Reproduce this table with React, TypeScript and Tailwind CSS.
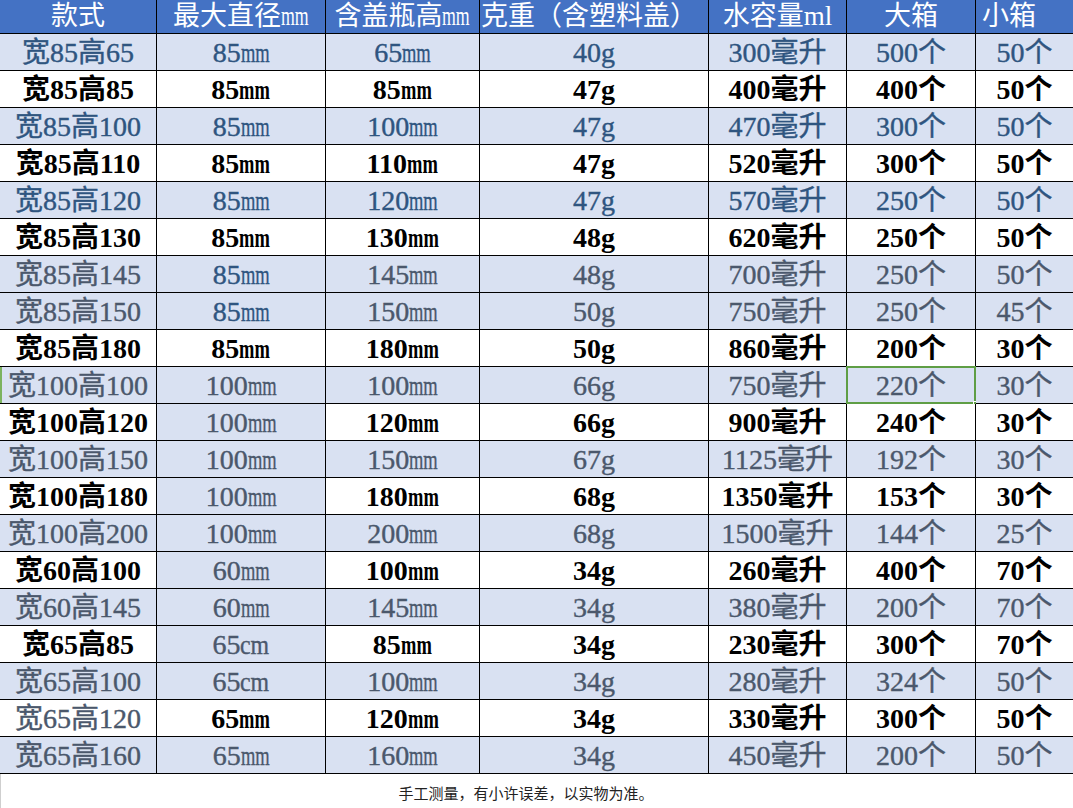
import React from 'react'

type RowKind =
  | 'shadedBlue'
  | 'shadedMixed'
  | 'shadedGray'
  | 'white'
  | 'whiteCol2'
  | 'whiteMuted1'

interface BottleRow {
  cells: string[]
  kind: RowKind
}

const rows: BottleRow[] = [
  { cells: ['宽85高65', '85mm', '65mm', '40g', '300毫升', '500个', '50个'], kind: 'shadedBlue' },
  { cells: ['宽85高85', '85mm', '85mm', '47g', '400毫升', '400个', '50个'], kind: 'white' },
  { cells: ['宽85高100', '85mm', '100mm', '47g', '470毫升', '300个', '50个'], kind: 'shadedBlue' },
  { cells: ['宽85高110', '85mm', '110mm', '47g', '520毫升', '300个', '50个'], kind: 'white' },
  { cells: ['宽85高120', '85mm', '120mm', '47g', '570毫升', '250个', '50个'], kind: 'shadedBlue' },
  { cells: ['宽85高130', '85mm', '130mm', '48g', '620毫升', '250个', '50个'], kind: 'white' },
  { cells: ['宽85高145', '85mm', '145mm', '48g', '700毫升', '250个', '50个'], kind: 'shadedMixed' },
  { cells: ['宽85高150', '85mm', '150mm', '50g', '750毫升', '250个', '45个'], kind: 'shadedMixed' },
  { cells: ['宽85高180', '85mm', '180mm', '50g', '860毫升', '200个', '30个'], kind: 'white' },
  { cells: ['宽100高100', '100mm', '100mm', '66g', '750毫升', '220个', '30个'], kind: 'shadedGray' },
  { cells: ['宽100高120', '100mm', '120mm', '66g', '900毫升', '240个', '30个'], kind: 'whiteCol2' },
  { cells: ['宽100高150', '100mm', '150mm', '67g', '1125毫升', '192个', '30个'], kind: 'shadedGray' },
  { cells: ['宽100高180', '100mm', '180mm', '68g', '1350毫升', '153个', '30个'], kind: 'whiteCol2' },
  { cells: ['宽100高200', '100mm', '200mm', '68g', '1500毫升', '144个', '25个'], kind: 'shadedGray' },
  { cells: ['宽60高100', '60mm', '100mm', '34g', '260毫升', '400个', '70个'], kind: 'whiteCol2' },
  { cells: ['宽60高145', '60mm', '145mm', '34g', '380毫升', '200个', '70个'], kind: 'shadedGray' },
  { cells: ['宽65高85', '65cm', '85mm', '34g', '230毫升', '300个', '70个'], kind: 'whiteCol2' },
  { cells: ['宽65高100', '65cm', '100mm', '34g', '280毫升', '324个', '50个'], kind: 'shadedGray' },
  { cells: ['宽65高120', '65mm', '120mm', '34g', '330毫升', '300个', '50个'], kind: 'whiteMuted1' },
  { cells: ['宽65高160', '65mm', '160mm', '34g', '450毫升', '200个', '50个'], kind: 'shadedGray' },
]

const SHADED_BLUE =
  'bg-[#d9e1f2] text-[#2f5580] font-normal [-webkit-text-stroke:0.4px]'
const SHADED_GRAY =
  'bg-[#d9e1f2] text-[#4b586c] font-normal [-webkit-text-stroke:0.4px]'
const WHITE_BLACK = 'bg-white text-black font-bold'
const WHITE_GRAY =
  'bg-white text-[#4b586c] font-normal [-webkit-text-stroke:0.4px]'

const cellTone = (kind: RowKind, col: number) => {
  switch (kind) {
    case 'shadedBlue':
      return SHADED_BLUE
    case 'shadedMixed':
      return col === 1 ? SHADED_BLUE : SHADED_GRAY
    case 'shadedGray':
      return SHADED_GRAY
    case 'whiteCol2':
      return col === 1 ? SHADED_GRAY : WHITE_BLACK
    case 'whiteMuted1':
      return col === 0 ? WHITE_GRAY : WHITE_BLACK
    default:
      return WHITE_BLACK
  }
}

const gridCols =
  'grid grid-cols-[157px_169px_154px_229px_138px_129px_97px]'

// the sheet's font draws latin letters half width, so squeeze the units
function CellText({ value }: { value: string }) {
  const match = value.match(/^(.*?)(mm|cm)$/)
  if (!match) return <>{value}</>
  return (
    <>
      {match[1]}
      {match[2] === 'mm' ? (
        <span className="-mr-[15px] inline-block origin-left scale-x-[0.66]">
          mm
        </span>
      ) : (
        <span className="-mr-[5px] inline-block origin-left scale-x-[0.85]">
          cm
        </span>
      )}
    </>
  )
}

function HeaderCell({
  children,
  last = false,
}: {
  children: React.ReactNode
  last?: boolean
}) {
  return (
    <div
      className={`flex h-[34px] items-center border-b border-black ${
        last ? 'justify-start pl-[6px]' : 'justify-center border-r'
      } whitespace-nowrap`}
    >
      {children}
    </div>
  )
}

function App() {
  return (
    <div className="h-[808px] w-[1073px] overflow-hidden bg-white font-['Liberation_Serif','Noto_Sans_CJK_SC',serif]">
      <div className={`${gridCols} bg-[#4472c4] text-[27px] leading-none text-white`}>
        <HeaderCell>款式</HeaderCell>
        <HeaderCell>
          最大直径
          <span className="-mr-[14px] inline-block origin-left scale-x-[0.66]">mm</span>
        </HeaderCell>
        <HeaderCell>
          含盖瓶高
          <span className="-mr-[14px] inline-block origin-left scale-x-[0.66]">mm</span>
        </HeaderCell>
        <HeaderCell>
          <span className="pr-[10px]">克重（含塑料盖）</span>
        </HeaderCell>
        <HeaderCell>水容量ml</HeaderCell>
        <HeaderCell>大箱</HeaderCell>
        <HeaderCell last>小箱</HeaderCell>
      </div>

      {rows.map((row, rowIndex) => (
        <div key={row.cells[0]} className={`${gridCols} text-[28px] leading-none`}>
          {row.cells.map((cell, col) => {
            const selected = rowIndex === 9 && col === 5
            const lastCol = col === row.cells.length - 1
            return (
              <div
                key={col}
                className={`relative flex h-[37px] items-center justify-center whitespace-nowrap border-b border-black pt-[2px] ${
                  lastCol ? '' : 'border-r'
                } ${cellTone(row.kind, col)} ${
                  rowIndex === 9 && col === 0 ? 'shadow-[inset_2px_0_0_#7cb35f]' : ''
                }`}
              >
                <CellText value={cell} />
                {selected && (
                  <>
                    <span className="absolute -top-[1px] -left-[1px] -right-[1px] -bottom-[1px] border-2 border-[#5f9e45]" />
                    <span className="absolute -bottom-[4px] -right-[4px] h-[6px] w-[6px] border border-white bg-[#5f9e45]" />
                  </>
                )}
              </div>
            )
          })}
        </div>
      ))}

      <div className="flex h-[34px] justify-center border-l border-[#cfcfcf] pr-[22px] pt-[11px] font-['Noto_Sans_CJK_SC',sans-serif] text-[15px] leading-none text-[#222]">
        手工测量，有小许误差，以实物为准。
      </div>
    </div>
  )
}

export default App
